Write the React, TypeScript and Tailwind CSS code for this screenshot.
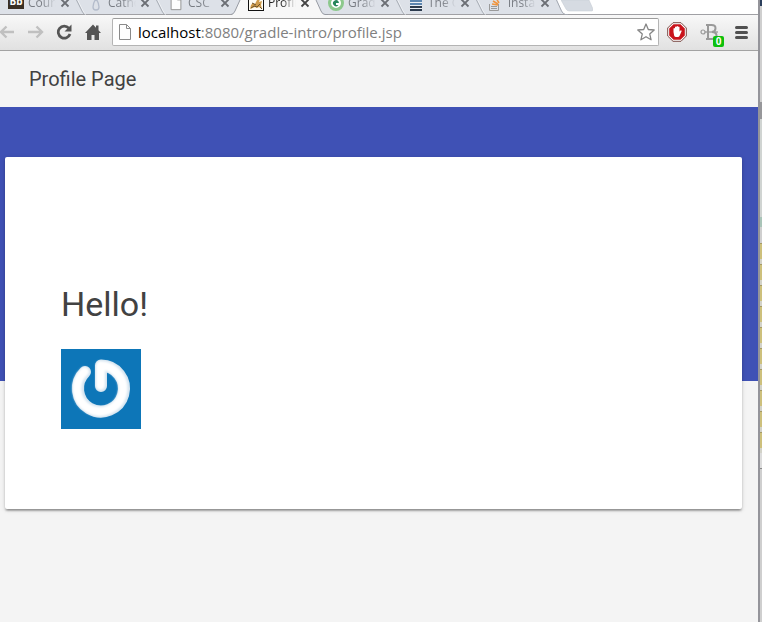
import React from "react";

type TabEdge = "between" | "beforeActive" | "active" | "last";

type Tab = { title: string; icon: React.ReactNode; edge: TabEdge };

const DocIcon = ({ className }: { className: string }) => (
  <svg viewBox="0 0 16 18" className={className} fill="#fdfdfd" stroke="#8a8a8a" aria-hidden="true">
    <path d="M2.5 1.5h7l4 4v11h-11z" />
    <path d="M9.5 1.5v4h4" fill="none" />
  </svg>
);

const tabs: Tab[] = [
  {
    title: "Courses",
    edge: "between",
    icon: (
      <span className="mb-1 flex h-4 w-4 shrink-0 items-center justify-center bg-[#3a3024] text-[10px] leading-4 font-bold text-white">
        Bb
      </span>
    ),
  },
  {
    title: "Catholic",
    edge: "between",
    icon: (
      <svg viewBox="0 0 16 16" className="h-4 w-4 shrink-0" fill="none" stroke="#b4bccb" strokeWidth="1.3" aria-hidden="true">
        <path d="M8 4C5.5 7 5 9 5 12c0 4 6 4 6 0 0-3-.5-5-3-8z" />
      </svg>
    ),
  },
  { title: "CSC", edge: "beforeActive", icon: <DocIcon className="h-4 w-4 shrink-0" /> },
  {
    title: "Profile",
    edge: "active",
    icon: (
      <svg viewBox="0 0 16 16" className="h-4 w-4 shrink-0" aria-hidden="true">
        <rect x=".5" y=".5" width="15" height="15" fill="#fffdf5" stroke="#111" />
        <path d="M2 14l1-4 2-2 2 1 2-4 3-1-1 3 3-1-1 4 1 4-3-2-2 1-2-1z" fill="#cf9c4c" />
        <path d="M3 13l3-2 3 1 3-3M4 8l4 2M12 12l2 2" stroke="#6b5228" fill="none" />
      </svg>
    ),
  },
  {
    title: "Gradle",
    edge: "between",
    icon: (
      <svg viewBox="0 0 16 16" className="h-4 w-4 shrink-0" fill="none" aria-hidden="true">
        <circle cx="8" cy="8" r="6.5" fill="#fff" stroke="#8cc88c" strokeWidth="3" />
        <path d="M10.500 6.500a3 3 0 1 0 0 3.500H8V8h3" fill="#27865a" />
      </svg>
    ),
  },
  {
    title: "The Gradle",
    edge: "between",
    icon: (
      <svg viewBox="0 0 16 16" className="mb-px h-4 w-4 shrink-0" fill="none" strokeWidth="2" aria-hidden="true">
        <rect x="2" y="0" width="12" height="16" fill="#e9eef5" />
        <path d="M2 6h12M2 9h12" stroke="#5d86b0" />
        <path d="M2 12h12M2 15h12" stroke="#2c3b4e" />
      </svg>
    ),
  },
  {
    title: "install",
    edge: "last",
    icon: (
      <svg viewBox="0 0 16 16" className="h-4 w-4 shrink-0" fill="none" aria-hidden="true">
        <path d="M1.500 9v6.500h9V9M3 13.500h6M3 11.500h6" stroke="#9a9a9a" />
        <path d="M4 9l6 1M5 6l5 3M8 3l3 5" stroke="#f0953f" strokeWidth="1.5" />
      </svg>
    ),
  },
];

const TabEdgeShape = ({ edge }: { edge: TabEdge }) => (
  <svg viewBox="0 0 17 15" className="h-[15px] w-[17px] shrink-0" fill="none" aria-hidden="true">
    {edge === "between" && (
      <>
        <path d="M6.500 0l6 12 2 2.500" stroke="#f4f6f9" strokeWidth="1" />
        <path d="M5.500 0l6 12 2 2.500" stroke="#a4a9b2" strokeWidth="1" />
      </>
    )}
    {edge === "beforeActive" && (
      <>
        <path d="M9 0L4 11Q2.500 14.500 0 15H17V0z" fill="#f7f7f7" />
        <path d="M9 0L4 11Q2.500 14.500 0 14.500" stroke="#979ba3" />
      </>
    )}
    {edge === "active" && (
      <>
        <path d="M0 0H5L10 11Q11.500 14.500 14 15H0z" fill="#f7f7f7" />
        <path d="M5 0v0h12v15h-3Q11.500 14.500 10 11z" fill="#dde1e8" />
        <path d="M5 0L10 11Q11.500 14.500 14 14.500H17" stroke="#979ba3" />
      </>
    )}
    {edge === "last" && (
      <>
        <path d="M6 0l5 11q1.500 3.500 6 3.500V0z" fill="#fff" />
        <path d="M5.500 0l5 11q1.500 3 4 3.500H17" stroke="#a4a9b2" />
      </>
    )}
  </svg>
);

const TabItem = ({ tab }: { tab: Tab }) => {
  const active = tab.edge === "active";
  return (
    <div
      className={
        "flex h-[15px] w-20 shrink-0 items-start " +
        (active ? "bg-[#f7f7f7]" : "bg-[#dde1e8] shadow-[inset_0_-1px_0_#a0a0a4]")
      }
    >
      <button type="button" className="-mt-[11px] flex h-7 w-[51px] items-center gap-1 overflow-hidden">
        {tab.icon}
        <span
          className={
            "w-7 overflow-hidden bg-linear-to-r from-50% to-transparent bg-clip-text text-left text-[12px] leading-4 whitespace-nowrap text-transparent " +
            (active ? "from-[#222]" : "from-[#777b82]")
          }
        >
          {tab.title}
        </span>
      </button>
      <button type="button" aria-label="Close tab" className="-mt-[3px] flex h-3 w-3 shrink-0 items-center justify-center">
        <svg viewBox="0 0 10 10" className="h-[10px] w-[10px]" stroke={active ? "#444" : "#6c6f75"} strokeWidth="1.800" aria-hidden="true">
          <path d="M1.500 1.500l7 7M8.500 1.500l-7 7" />
        </svg>
      </button>
      <TabEdgeShape edge={tab.edge} />
    </div>
  );
};

const Toolbar = () => (
  <div className="flex h-9 items-center border-b border-[#a3a3a3] bg-linear-to-b from-[#f8f8f8] to-[#e1e1e1] pb-px">
    <button type="button" aria-label="Back" className="flex w-7 shrink-0">
      <svg viewBox="0 0 16 16" className="h-4 w-4" fill="none" stroke="#c0c0c0" strokeWidth="2.400" aria-hidden="true">
        <path d="M14 8H1M6.500 2.500L1 8l5.500 5.500" />
      </svg>
    </button>
    <button type="button" aria-label="Forward" className="flex w-7 shrink-0">
      <svg viewBox="0 0 16 16" className="h-4 w-4" fill="none" stroke="#c0c0c0" strokeWidth="2.400" aria-hidden="true">
        <path d="M0 8h13M8.500 2.500L14 8l-5.500 5.500" />
      </svg>
    </button>
    <button type="button" aria-label="Reload" className="flex w-[29px] shrink-0">
      <svg viewBox="0 0 16 16" className="h-4 w-4" fill="none" aria-hidden="true">
        <path d="M12.800 4.200A6 6 0 1 0 14 10" stroke="#555" strokeWidth="2.700" />
        <path d="M15.500.5v7h-7z" fill="#555" />
      </svg>
    </button>
    <button type="button" aria-label="Home" className="flex w-[27px] shrink-0">
      <svg viewBox="0 0 16 16" className="h-4 w-4" fill="#555" aria-hidden="true">
        <path d="M8 .5L0 9h2v7h4.500v-5h3v5H14V9h2l-2.500-2.700V1.500H11v2.200z" />
      </svg>
    </button>
    <form className="flex h-7 min-w-0 flex-1 items-center rounded-[2px] border border-[#b4b4b4] border-t-[#9c9c9c] bg-white pl-1" onSubmit={(e) => e.preventDefault()}>
      <DocIcon className="h-[18px] w-4 shrink-0" />
      <div className="min-w-0 flex-1 pl-[5px] font-['Open_Sans','Noto_Sans',sans-serif] text-[15px] leading-5 whitespace-nowrap text-[#808080]">
        <span className="text-black">localhost</span>:8080/gradle-intro/profile.jsp
      </div>
      <button type="button" aria-label="Bookmark this page" className="mr-[3px] flex shrink-0">
        <svg viewBox="0 0 18 18" className="h-[18px] w-[18px]" fill="#fff" stroke="#858585" strokeWidth="1.300" strokeLinejoin="round" aria-hidden="true">
          <path d="M9 1l2.300 5.500 5.900.5-4.500 3.900 1.400 5.900L9 13.700l-5.100 3.100 1.400-5.900L.8 7l5.900-.5z" />
        </svg>
      </button>
    </form>
    <button type="button" aria-label="Ad blocker" className="ml-2 flex shrink-0">
      <svg viewBox="0 0 20 20" className="h-5 w-5" aria-hidden="true">
        <path d="M6 .7h8L19.300 6v8L14 19.300H6L.7 14V6z" fill="#fff" stroke="#7b4b46" />
        <path d="M6.500 2.200h7l4.300 4.300v7l-4.300 4.300h-7l-4.300-4.300v-7z" fill="#c9131b" />
        <path d="M6.500 10V6.500q.8-.8 1.500 0V5q.8-.8 1.500 0v-.5q.8-.8 1.500 0V5q.8-.8 1.500 0v4.500l1.300-1.300q1 0 .8 1L12.500 14q-.5 1-1.500 1H9q-1.300 0-1.800-1.200z" fill="#fff" />
      </svg>
    </button>
    <button type="button" aria-label="Extension, 0 items" className="relative ml-[13px] flex shrink-0">
      <svg viewBox="0 0 24 24" className="h-6 w-6" fill="none" stroke="#999" aria-hidden="true">
        <circle cx="3" cy="12" r="2" strokeWidth="1.200" />
        <path d="M5 12h13" strokeWidth="1.300" />
        <path d="M6 5h5.500q4 0 4 3.200T12 12q4.500 0 4.500 3.500T12 19H6M8 5v14" strokeWidth="2" />
      </svg>
      <span className="absolute right-0 -bottom-[3px] flex h-[11px] w-[11px] items-center justify-center rounded-[2px] bg-[#0cc00c] text-[10px] leading-none font-bold text-white">0</span>
    </button>
    <button type="button" aria-label="Menu" className="mr-[10px] ml-[11px] flex shrink-0">
      <svg viewBox="0 0 13 13" className="h-[13px] w-[13px]" stroke="#505050" strokeWidth="3" strokeLinecap="round" aria-hidden="true">
        <path d="M1.500 1.500h10M1.500 6.500h10M1.500 11.500h10" />
      </svg>
    </button>
  </div>
);

const DesktopSliver = () => (
  <div className="flex w-1 shrink-0 flex-col border-l-2 border-[#94949a] bg-[#dcdcdc]" aria-hidden="true">
    <div className="h-[6px] bg-[#2b3f5c]" />
    <div className="h-[96px] bg-[#cfcfcf]" />
    <div className="h-[17px] bg-[#97979a]" />
    <div className="h-[98px] bg-[#d0d4d2]" />
    <div className="h-[10px] bg-[#a9c4b8]" />
    <div className="h-[16px] bg-[#cfcfcf]" />
    {Array.from({ length: 10 }, (_, i) => (
      <div key={i} className="h-[21px] border-t border-b-5 border-t-[#a59a66] border-b-[#d2d2c8] bg-[#cdc07c]" />
    ))}
    <div className="h-[16px] border-b border-[#888]" />
    <div className="flex-1 bg-[#cfcfcf]" />
  </div>
);

export default function App() {
  return (
    <div className="flex min-h-screen bg-[#f4f4f4] font-[Roboto,sans-serif]">
      <div className="flex min-w-0 flex-1 flex-col">
        <nav aria-label="Tabs" className="flex h-[15px] overflow-hidden bg-white font-['Open_Sans','Noto_Sans',sans-serif] shadow-[inset_0_-1px_0_#a0a0a4]">
          <div className="w-2 shrink-0 bg-[#dde1e8] shadow-[inset_0_-1px_0_#a0a0a4]" />
          {tabs.map((tab) => (
            <TabItem key={tab.title} tab={tab} />
          ))}
          <button type="button" aria-label="New tab" className="-ml-[7px] flex shrink-0">
            <svg viewBox="0 0 32 15" className="h-[15px] w-8" aria-hidden="true">
              <path d="M0 0h28l4 9q.5 2-1.500 2H8q-2 0-3-2z" fill="#d6dbe2" stroke="#c3c8d0" strokeWidth=".5" />
            </svg>
          </button>
        </nav>
        <Toolbar />
        <header className="flex h-14 items-center px-[29px]">
          <h1 className="text-[20px] leading-7 text-[#424242]">Profile Page</h1>
        </header>
        <div className="h-[274px] bg-[#3f51b5]" />
        <main className="mr-4 -mt-56 ml-[5px] rounded-[2px] bg-white px-14 pt-32 pb-20 shadow-[0_2px_2px_0_rgba(0,0,0,.2),0_3px_2px_-2px_rgba(0,0,0,.25),0_1px_5px_0_rgba(0,0,0,.14)]">
          <h2 className="text-[34px] leading-[38px] text-[#424242]">Hello!</h2>
          <svg viewBox="0 0 80 80" className="mt-[26px] h-20 w-20" role="img" aria-label="Profile picture">
            <defs>
              <filter id="soft" x="-20%" y="-20%" width="140%" height="140%">
                <feGaussianBlur stdDeviation="1" />
              </filter>
            </defs>
            <rect width="80" height="80" fill="#0d76b8" />
            <g fill="none" strokeLinecap="round" strokeLinejoin="round">
              <path d="M40 37V16.500A23 23 0 1 1 24 23" stroke="#d3e3ef" strokeWidth="12" />
              <path d="M39.500 36.500V16.500A23 23 0 1 1 23.500 22.500" stroke="#fff" strokeWidth="9" filter="url(#soft)" />
            </g>
          </svg>
        </main>
      </div>
      <DesktopSliver />
    </div>
  );
}
